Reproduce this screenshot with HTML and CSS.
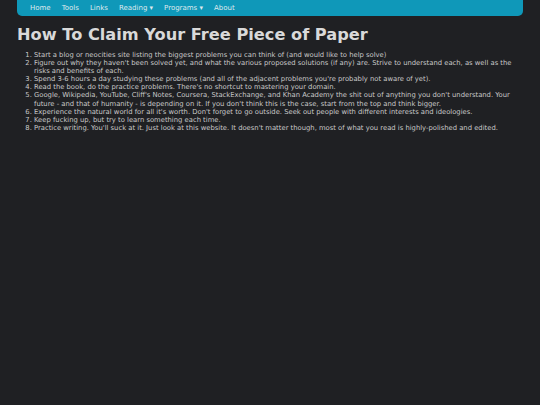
FILE: index.html
```html
<!DOCTYPE html>
<html>
<head>
<meta charset="utf-8">
<link rel="stylesheet" href="styles.css">
</head>
<body>
<div class="page">
  <nav class="nav">
    <a class="nav-item">Home</a>
    <a class="nav-item">Tools</a>
    <a class="nav-item">Links</a>
    <a class="nav-item">Reading ▾</a>
    <a class="nav-item">Programs ▾</a>
    <a class="nav-item">About</a>
  </nav>
  <h1 class="title">How To Claim Your Free Piece of Paper</h1>
  <ol class="list">
    <li>Start a blog or neocities site listing the biggest problems you can think of (and would like to help solve)</li>
    <li>Figure out why they haven't been solved yet, and what the various proposed solutions (if any) are. Strive to understand each, as well as the risks and benefits of each.</li>
    <li>Spend 3-6 hours a day studying these problems (and all of the adjacent problems you're probably not aware of yet).</li>
    <li>Read the book, do the practice problems. There's no shortcut to mastering your domain.</li>
    <li>Google, Wikipedia, YouTube, Cliff's Notes, Coursera, StackExchange, and Khan Academy the shit out of anything you don't understand. Your future - and that of humanity - is depending on it. If you don't think this is the case, start from the top and think bigger.</li>
    <li>Experience the natural world for all it's worth. Don't forget to go outside. Seek out people with different interests and ideologies.</li>
    <li>Keep fucking up, but try to learn something each time.</li>
    <li>Practice writing. You'll suck at it. Just look at this website. It doesn't matter though, most of what you read is highly-polished and edited.</li>
  </ol>
</div>
</body>
</html>
```

FILE: styles.css
```css
html, body {
  margin: 0;
  padding: 0;
  background: #1f2023;
}
body {
  font-family: "DejaVu Sans", Verdana, sans-serif;
  color: #c9c9c9;
}
.page {
  padding: 0 17px;
}
.nav {
  display: flex;
  height: 16px;
  align-items: center;
  background: #0f98b9;
  border-radius: 0 0 5px 5px;
  padding: 0 13px;
}
.nav-item {
  font-size: 7px;
  color: #dfe9ee;
  margin-right: 11px;
}
.title {
  margin: 9px 0 0 0;
  font-size: 16.2px;
  font-weight: bold;
  color: #d9d9d9;
  line-height: 20px;
}
.list {
  margin: 6px 0 0 0;
  padding-left: 17px;
  font-size: 6.8px;
  line-height: 8.1px;
}
```
